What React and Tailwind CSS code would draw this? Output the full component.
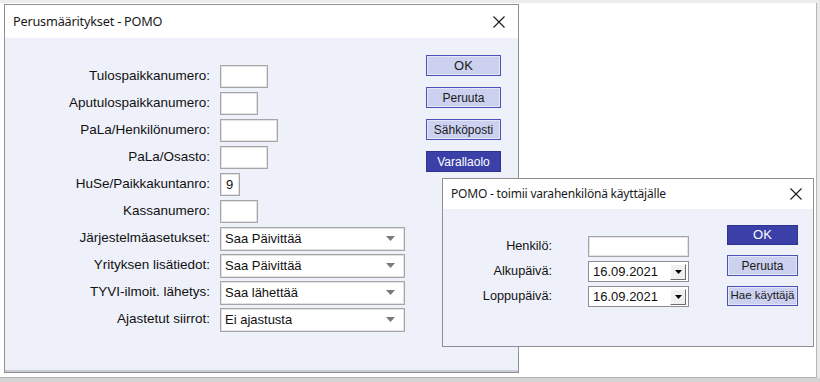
import React from "react";

function CloseX() {
  return (
    <svg width="12" height="12" viewBox="0 0 12 12" className="block">
      <path d="M0.5 0.5 L11.5 11.5 M11.5 0.5 L0.5 11.5" stroke="#1a1a1a" strokeWidth="1.1" fill="none" />
    </svg>
  );
}

function TextBox({ w, value }) {
  return (
    <div
      className={`h-[23px] bg-white border border-[#a6a6a6] shadow-[inset_0_0_0_1px_#e2e2e2] flex items-center px-[5px] text-[13px] text-[#111] ${w}`}
    >
      {value}
    </div>
  );
}

function SelectBox({ value }) {
  return (
    <div className="h-[24px] w-[185px] bg-white border border-[#a6a6a6] shadow-[inset_0_0_0_1px_#e2e2e2] flex items-center justify-between pl-[4px] pr-[9px] text-[13px] text-[#111]">
      <span>{value}</span>
      <svg width="9" height="5" viewBox="0 0 9 5" className="block">
        <path d="M0 0 L9 0 L4.5 5 Z" fill="#7a7a7a" />
      </svg>
    </div>
  );
}

function LightBtn({ children, w = "w-[75px]", h = "h-[21px]" }) {
  return (
    <div
      className={`${w} ${h} bg-[#ccd1ef] border border-[#4b53b8] shadow-[inset_0_0_0_1px_#e4e7f8] flex items-center justify-center text-[12px] text-[#1a1a1a]`}
    >
      {children}
    </div>
  );
}

function DarkBtn({ children, w = "w-[75px]", h = "h-[21px]" }) {
  return (
    <div
      className={`${w} ${h} bg-[#3a40a8] border border-[#2e3490] flex items-center justify-center text-[12px] text-white`}
    >
      {children}
    </div>
  );
}

function DateBox({ value }) {
  return (
    <div className="h-[21px] w-[101px] bg-white border border-[#8e8e8e] flex items-center justify-between pl-[4px] pr-[2px] text-[13px] text-[#111]">
      <span>{value}</span>
      <div className="w-[16px] h-[16px] bg-[#f0f0f0] border border-t-[#ffffff] border-l-[#ffffff] border-r-[#6e6e6e] border-b-[#6e6e6e] flex items-center justify-center">
        <svg width="7" height="4" viewBox="0 0 7 4" className="block">
          <path d="M0 0 L7 0 L3.5 4 Z" fill="#000" />
        </svg>
      </div>
    </div>
  );
}

const rows = [
  { label: "Tulospaikkanumero:", type: "text", w: "w-[48px]" },
  { label: "Aputulospaikkanumero:", type: "text", w: "w-[38px]" },
  { label: "PaLa/Henkilönumero:", type: "text", w: "w-[58px]" },
  { label: "PaLa/Osasto:", type: "text", w: "w-[48px]" },
  { label: "HuSe/Paikkakuntanro:", type: "text", w: "w-[20px]", value: "9" },
  { label: "Kassanumero:", type: "text", w: "w-[38px]" },
  { label: "Järjestelmäasetukset:", type: "select", value: "Saa Päivittää" },
  { label: "Yrityksen lisätiedot:", type: "select", value: "Saa Päivittää" },
  { label: "TYVI-ilmoit. lähetys:", type: "select", value: "Saa lähettää" },
  { label: "Ajastetut siirrot:", type: "select", value: "Ei ajastusta" },
];

export default function App() {
  return (
    <div className="w-[820px] h-[382px] bg-[#e9e9e9] relative overflow-hidden flex flex-col font-['Liberation_Sans',Arial,sans-serif]">
      <div className="h-[3px] bg-[#ececec] shrink-0" />
      <div className="flex-1 flex">
        <div className="w-[817px] bg-white border-r border-b border-[#b4b4b4] pt-[1px] pl-[4px] flex">
          {/* Main dialog */}
          <div className="w-[515px] h-[369px] border border-[#8f8f8f] flex flex-col">
            <div className="h-[33px] bg-white flex items-center justify-between pl-[8px] pr-[13px] shrink-0">
              <span className="text-[12.7px] text-[#1a1a1a] font-['Noto_Sans',sans-serif] tracking-[-0.2px]">
                Perusmääritykset - POMO
              </span>
              <CloseX />
            </div>
            <div className="flex-1 bg-[#eef1fa] flex border-b-[2px] border-[#c9ccd6]">
              <div className="w-[421px] pt-[27px] flex flex-col gap-[4px]">
                {rows.map((r) => (
                  <div key={r.label} className="flex items-center h-[23px]">
                    <div className="w-[205px] text-right text-[13.5px] text-[#111]">{r.label}</div>
                    <div className="ml-[10px]">
                      {r.type === "text" ? (
                        <TextBox w={r.w} value={r.value} />
                      ) : (
                        <SelectBox value={r.value} />
                      )}
                    </div>
                  </div>
                ))}
              </div>
              <div className="pt-[17px] flex flex-col gap-[11px]">
                <LightBtn>
                  <span className="text-[13px]">OK</span>
                </LightBtn>
                <LightBtn>Peruuta</LightBtn>
                <LightBtn>Sähköposti</LightBtn>
                <DarkBtn>Varallaolo</DarkBtn>
              </div>
            </div>
          </div>
        </div>
      </div>
      <div className="h-[4px] bg-[#d4d4d4] shrink-0" />

      {/* Secondary dialog window */}
      <div className="absolute left-[442px] top-[178px] w-[372px] h-[169px] border border-[#8f8f8f] flex flex-col">
        <div className="h-[30px] bg-white flex items-center justify-between pl-[8px] pr-[11px] shrink-0">
          <span className="text-[12px] text-[#1a1a1a] font-['Noto_Sans',sans-serif] tracking-[-0.2px]">
            POMO - toimii varahenkilönä käyttäjälle
          </span>
          <CloseX />
        </div>
        <div className="flex-1 bg-[#eef1fa] flex">
          <div className="pt-[27px] flex flex-col gap-[4px]">
            <div className="flex items-center h-[21px]">
              <div className="w-[109px] text-right text-[12.7px] text-[#111]">Henkilö:</div>
              <div className="ml-[36px] w-[101px] h-[21px] bg-white border border-[#a6a6a6] shadow-[inset_0_0_0_1px_#e2e2e2]" />
            </div>
            <div className="flex items-center h-[21px]">
              <div className="w-[109px] text-right text-[12.7px] text-[#111]">Alkupäivä:</div>
              <div className="ml-[36px]">
                <DateBox value="16.09.2021" />
              </div>
            </div>
            <div className="flex items-center h-[21px]">
              <div className="w-[109px] text-right text-[12.7px] text-[#111]">Loppupäivä:</div>
              <div className="ml-[36px]">
                <DateBox value="16.09.2021" />
              </div>
            </div>
          </div>
          <div className="ml-[38px] pt-[16px] flex flex-col gap-[10px]">
            <DarkBtn w="w-[71px]" h="h-[20px]">
              <span className="text-[13px]">OK</span>
            </DarkBtn>
            <LightBtn w="w-[71px]" h="h-[21px]">Peruuta</LightBtn>
            <LightBtn w="w-[71px]" h="h-[20px]">
              <span className="text-[11.5px]">Hae käyttäjä</span>
            </LightBtn>
          </div>
        </div>
      </div>
    </div>
  );
}
